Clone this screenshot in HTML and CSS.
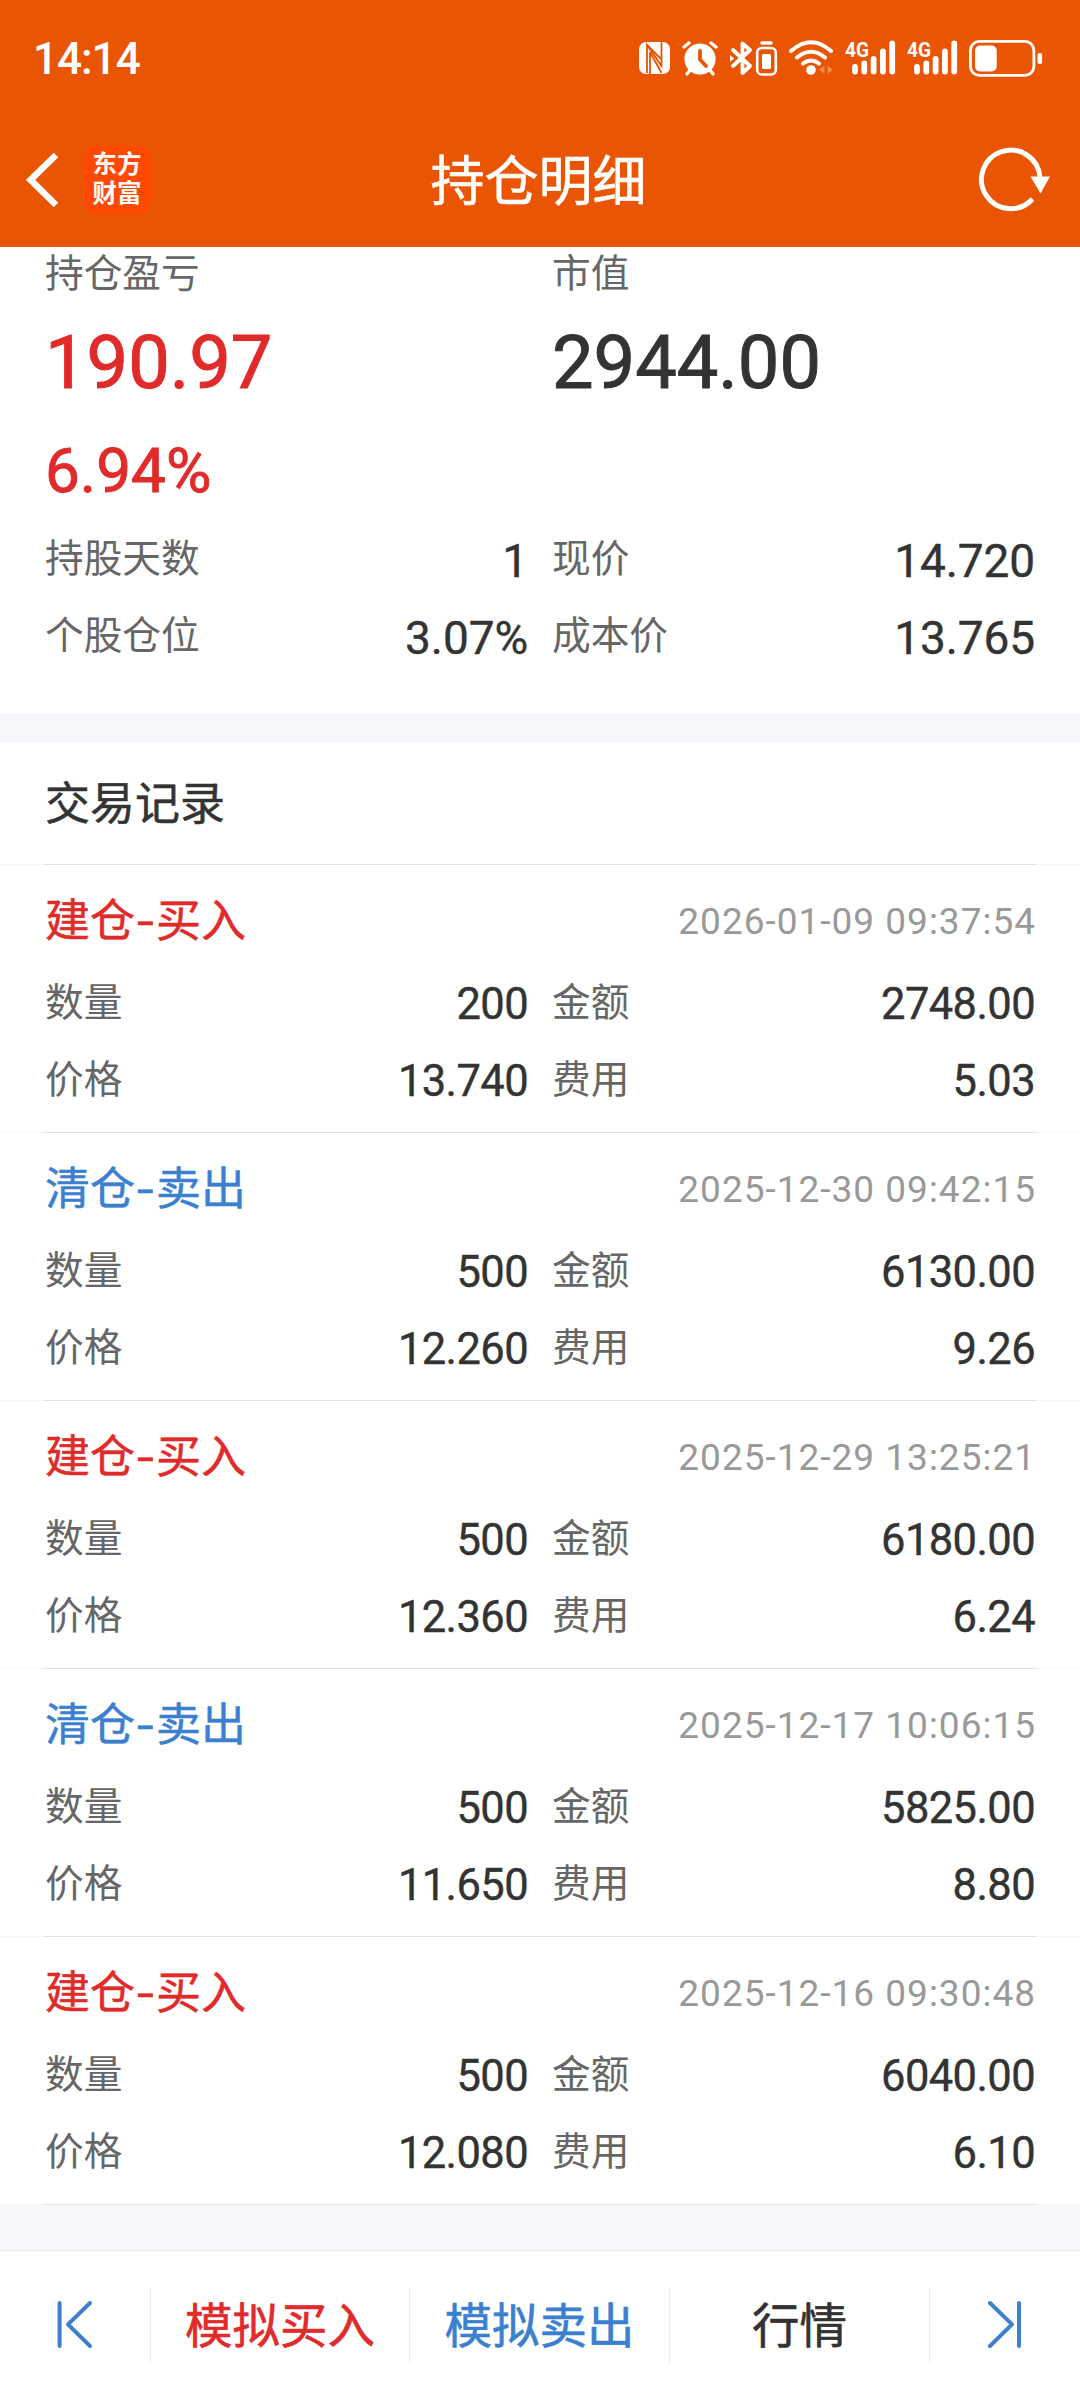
FILE: index.html
```html
<!DOCTYPE html>
<html lang="zh-CN">
	<head>
		<meta charset="utf-8" />
		<title>持仓明细</title>
		<link rel="stylesheet" href="styles.css">
	</head>
	<body>
		<div class="header">
			<div class="status">
				<span class="clock">14:14</span>
				<div class="status-icons">
					<!-- NFC -->
					<svg width="32" height="38" viewBox="638 39 32 38">
						<rect x="639" y="42" width="31" height="32" rx="7" fill="#fff"/>
						<path d="M647 73V45L661.500 66V42" fill="none" stroke="#e95502" stroke-width="1.8"/>
						<path d="M650 74V52L661.500 73M647 45L661 59" fill="none" stroke="#e95502" stroke-width="1.8"/>
					</svg>
					<!-- 闹钟 -->
					<svg class="alarm" width="38" height="38" viewBox="681 39 38 38">
						<circle cx="700" cy="59" r="15.6" fill="#fff"/>
						<path d="M684 47L689 43M716 47L711 43M690 70L687 74M710 70L713 74" stroke="#fff" stroke-width="3.4" stroke-linecap="round"/>
						<path d="M700 51V59.500L706 66" fill="none" stroke="#e95502" stroke-width="3.8" stroke-linecap="round" stroke-linejoin="round"/>
					</svg>
					<!-- 蓝牙 -->
					<svg class="bluetooth" width="50" height="38" viewBox="729 39 50 38">
						<path d="M733 50L750 66L742.500 73V43.500L750 50L733 66" fill="none" stroke="#fff" stroke-width="3.8" stroke-linejoin="round" stroke-linecap="round"/>
						<path d="M730 55L734 58.500L730 62z" fill="#fff"/>
						<rect x="757.200" y="48" width="18.600" height="26.500" rx="4.500" fill="none" stroke="#fff" stroke-width="2.600"/>
						<rect x="762" y="54" width="9" height="15" rx="1.500" fill="#fff"/>
						<path d="M762 43H771" stroke="#fff" stroke-width="3.400" stroke-linecap="round"/>
					</svg>
					<!-- wifi -->
					<svg class="wifi" width="48" height="38" viewBox="788 39 48 38">
						<path d="M791 51Q811 33.500 831 51M797 57.500Q811 46 825 57.500M803 63.500Q811 57.500 819 63.500" fill="none" stroke="#fff" stroke-width="4" stroke-linecap="round"/>
						<circle cx="811" cy="70" r="4.800" fill="#fff"/>
						<path d="M824.500 65.500V74L819 69.800zM827.500 65.500V74L833 69.800z" fill="#f08a50"/>
					</svg>
					<svg class="signal" width="52" height="50" viewBox="844 33 52 50">
						<text class="net" x="845" y="57" textLength="24" lengthAdjust="spacingAndGlyphs">4G</text>
						<path d="M855 67V71.500M864.300 63.500V71.500M873.600 59V71.500M882.900 51.500V71.500M892.200 43.500V71.500" stroke="#fff" stroke-width="5.800" stroke-linecap="round"/>
					</svg>
					<svg class="signal second" width="52" height="50" viewBox="844 33 52 50">
						<text class="net" x="845" y="57" textLength="24" lengthAdjust="spacingAndGlyphs">4G</text>
						<path d="M855 67V71.500M864.300 63.500V71.500M873.600 59V71.500M882.900 51.500V71.500M892.200 43.500V71.500" stroke="#fff" stroke-width="5.800" stroke-linecap="round"/>
					</svg>
					<!-- 电池 -->
					<svg class="battery" width="75" height="38" viewBox="968 38 75 38">
						<rect x="970.400" y="40.400" width="63.500" height="34" rx="9" fill="none" stroke="#fff" stroke-width="2.800"/>
						<rect x="975" y="44.500" width="21.700" height="26" rx="5" fill="#fff"/>
						<rect x="1037.500" y="52" width="4.600" height="11" rx="2" fill="#fff"/>
					</svg>
				</div>
			</div>
			<div class="nav">
				<div class="nav-left">
					<svg width="32" height="58" viewBox="26 150.500 32 58">
						<path d="M56 154.500L30.500 179.400L56 204.500" fill="none" stroke="#fff" stroke-width="6.5"/>
					</svg>
					<div class="logo">东方<br>财富</div>
				</div>
				<h1 class="title">持仓明细</h1>
				<div class="nav-right">
					<svg width="74" height="68" viewBox="977 145.500 74 68">
						<path d="M1040 177A29.300 29.300 0 1 0 1032.500 198.500" fill="none" stroke="#fff" stroke-width="5"/>
						<path d="M1030.500 176H1050L1040.500 193z" fill="#fff"/>
					</svg>
				</div>
			</div>
		</div>

		<div class="summary">
			<div class="row top-label">
				<span class="label">持仓盈亏</span>
				<span class="label">市值</span>
			</div>
			<div class="row big">
				<span class="red">190.97</span>
				<span>2944.00</span>
			</div>
			<div class="percent red">6.94%</div>
			<div class="row detail">
				<div class="cell"><span class="label">持股天数</span><span class="value">1</span></div>
				<div class="cell"><span class="label">现价</span><span class="value">14.720</span></div>
			</div>
			<div class="row detail">
				<div class="cell"><span class="label">个股仓位</span><span class="value">3.07%</span></div>
				<div class="cell"><span class="label">成本价</span><span class="value">13.765</span></div>
			</div>
		</div>

		<div class="records">
			<h2 class="records-title">交易记录</h2>
			<div class="record">
				<div class="record-head">
					<span class="type red">建仓<i>-</i>买入</span>
					<span class="time">2026-01-09 09:37:54</span>
				</div>
				<div class="row">
					<div class="cell"><span class="label">数量</span><span class="value">200</span></div>
					<div class="cell"><span class="label">金额</span><span class="value">2748.00</span></div>
				</div>
				<div class="row">
					<div class="cell"><span class="label">价格</span><span class="value">13.740</span></div>
					<div class="cell"><span class="label">费用</span><span class="value">5.03</span></div>
				</div>
			</div>
			<div class="record">
				<div class="record-head">
					<span class="type blue">清仓<i>-</i>卖出</span>
					<span class="time">2025-12-30 09:42:15</span>
				</div>
				<div class="row">
					<div class="cell"><span class="label">数量</span><span class="value">500</span></div>
					<div class="cell"><span class="label">金额</span><span class="value">6130.00</span></div>
				</div>
				<div class="row">
					<div class="cell"><span class="label">价格</span><span class="value">12.260</span></div>
					<div class="cell"><span class="label">费用</span><span class="value">9.26</span></div>
				</div>
			</div>
			<div class="record">
				<div class="record-head">
					<span class="type red">建仓<i>-</i>买入</span>
					<span class="time">2025-12-29 13:25:21</span>
				</div>
				<div class="row">
					<div class="cell"><span class="label">数量</span><span class="value">500</span></div>
					<div class="cell"><span class="label">金额</span><span class="value">6180.00</span></div>
				</div>
				<div class="row">
					<div class="cell"><span class="label">价格</span><span class="value">12.360</span></div>
					<div class="cell"><span class="label">费用</span><span class="value">6.24</span></div>
				</div>
			</div>
			<div class="record">
				<div class="record-head">
					<span class="type blue">清仓<i>-</i>卖出</span>
					<span class="time">2025-12-17 10:06:15</span>
				</div>
				<div class="row">
					<div class="cell"><span class="label">数量</span><span class="value">500</span></div>
					<div class="cell"><span class="label">金额</span><span class="value">5825.00</span></div>
				</div>
				<div class="row">
					<div class="cell"><span class="label">价格</span><span class="value">11.650</span></div>
					<div class="cell"><span class="label">费用</span><span class="value">8.80</span></div>
				</div>
			</div>
			<div class="record">
				<div class="record-head">
					<span class="type red">建仓<i>-</i>买入</span>
					<span class="time">2025-12-16 09:30:48</span>
				</div>
				<div class="row">
					<div class="cell"><span class="label">数量</span><span class="value">500</span></div>
					<div class="cell"><span class="label">金额</span><span class="value">6040.00</span></div>
				</div>
				<div class="row">
					<div class="cell"><span class="label">价格</span><span class="value">12.080</span></div>
					<div class="cell"><span class="label">费用</span><span class="value">6.10</span></div>
				</div>
			</div>
		</div>

		<div class="footer">
			<a class="arrow">
				<svg width="36" height="50" viewBox="58 2298 36 50">
					<path d="M60.600 2302V2345M91 2302L69 2323.400L91 2345" fill="none" stroke="#3f80cc" stroke-width="4" stroke-linecap="round" stroke-linejoin="round"/>
				</svg>
			</a>
			<a class="red">模拟买入</a>
			<a class="blue">模拟卖出</a>
			<a>行情</a>
			<a class="arrow">
				<svg width="36" height="50" viewBox="988 2298 36 50">
					<path d="M1020 2302V2345M991 2302L1013 2323.400L991 2345" fill="none" stroke="#3f80cc" stroke-width="4" stroke-linecap="round" stroke-linejoin="round"/>
				</svg>
			</a>
		</div>
	</body>
</html>
```

FILE: styles.css
```css
*{
	box-sizing: border-box;
}
body{
	margin: 0;
	width: 1080px;
	height: 2400px;
	background-color: #f6f8fb;
	color: #333;
	font-family: Roboto, "Noto Sans CJK SC", sans-serif;
	overflow: hidden;
}
h1, h2{
	margin: 0;
	font-weight: 400;
}
svg{
	display: block;
}
.red{
	color: #e12a2a;
}
.blue{
	color: #3b7fd0;
}

/* 顶部 */
.header{
	height: 247px;
	background-color: #e95502;
	color: #fff;
}
.status{
	display: flex;
	justify-content: space-between;
	height: 113px;
	padding: 3px 37px 0 33px;
	align-items: center;
}
.clock{
	padding-top: 1px;
	font-size: 44px;
	font-weight: 500;
	letter-spacing: -1px;
	line-height: 50px;
}
.status-icons{
	display: flex;
	align-items: center;
}
.alarm{
	margin-left: 11px;
}
.bluetooth{
	margin-left: 10px;
}
.wifi{
	margin-left: 9px;
}
.signal{
	margin-left: 8px;
}
.second{
	margin-left: 10px;
}
.battery{
	margin-left: 10px;
}
.net{
	font-size: 21px;
	font-weight: 700;
	fill: #fff;
}
.nav{
	display: grid;
	grid-template-columns: 1fr auto 1fr;
	align-items: center;
	height: 134px;
	padding: 0 29px 0 26px;
}
.nav-left{
	display: flex;
	align-items: center;
	gap: 25px;
}
.nav-right{
	display: flex;
	justify-content: flex-end;
}
.logo{
	width: 68px;
	height: 68px;
	padding-top: 4px;
	border-radius: 14px;
	background-color: #ff4800;
	font-size: 24.500px;
	font-weight: 700;
	line-height: 29px;
	text-align: center;
}
.title{
	padding-top: 5px;
	font-size: 54px;
	line-height: 80px;
	-webkit-text-stroke: 0.6px;
}

/* 持仓概况 */
.summary{
	height: 466px;
	padding: 0 45px;
	background-color: #fff;
}
.row{
	display: grid;
	grid-template-columns: 1fr 1fr;
	column-gap: 24px;
	height: 77px;
	line-height: 77px;
}
.cell{
	display: flex;
	justify-content: space-between;
}
.label{
	padding-top: 1px;
	font-size: 38.700px;
	color: #666;
}
.value{
	padding-top: 3px;
	font-size: 43.500px;
	letter-spacing: -0.6px;
	-webkit-text-stroke: 0.4px;
}
.top-label{
	height: 52px;
	line-height: 52px;
}
.big{
	height: 125px;
	padding-top: 1px;
	line-height: 125px;
	font-size: 74px;
	-webkit-text-stroke: 1px;
}
.percent{
	height: 95px;
	padding-top: 1px;
	line-height: 92px;
	font-size: 62px;
	-webkit-text-stroke: 0.9px;
}
.detail .value{
	padding-top: 4px;
	font-size: 46px;
	letter-spacing: -0.1px;
}

/* 交易记录 */
.records{
	margin-top: 30px;
	background-color: #fff;
}
.records-title{
	height: 122px;
	padding: 2px 0 0 45px;
	border-bottom: 1px solid #e6e6e6;
	border-image: linear-gradient(to right, #f8f8f8 45px, #e4e4e4 45px, #e4e4e4 1035px, #f8f8f8 1035px) 1;
	font-size: 45px;
	line-height: 120px;
	-webkit-text-stroke: 0.5px;
}
.record{
	height: 268px;
	padding: 17px 45px 0;
	border-bottom: 1px solid #e6e6e6;
	border-image: linear-gradient(to right, #f8f8f8 45px, #e4e4e4 45px, #e4e4e4 1035px, #f8f8f8 1035px) 1;
}
.record-head{
	display: flex;
	justify-content: space-between;
	height: 81px;
	line-height: 79px;
}
.type{
	font-size: 45px;
	-webkit-text-stroke: 0.5px;
}
.type i{
	display: inline-block;
	width: 21px;
	font-style: normal;
	text-align: center;
	transform: scaleX(1.35);
}
.time{
	font-size: 37px;
	letter-spacing: 1px;
	line-height: 80px;
	color: #999;
	margin-right: -1px;
}

/* 底部操作栏 */
.footer{
	display: grid;
	grid-template-columns: 151px 259px 260px 260px 150px;
	height: 150px;
	margin-top: 45px;
	padding-top: 37px;
	border-top: 1px solid #e9e9e9;
	background-color: #fff;
	font-size: 47.500px;
	line-height: 79px;
	text-align: center;
	-webkit-text-stroke: 0.6px;
}
.footer a{
	height: 75px;
	border-right: 1px solid #ececec;
}
.footer a:last-child{
	border-right: none;
}
.footer .arrow{
	display: flex;
	align-items: center;
	justify-content: center;
	padding-bottom: 4px;
}
```
